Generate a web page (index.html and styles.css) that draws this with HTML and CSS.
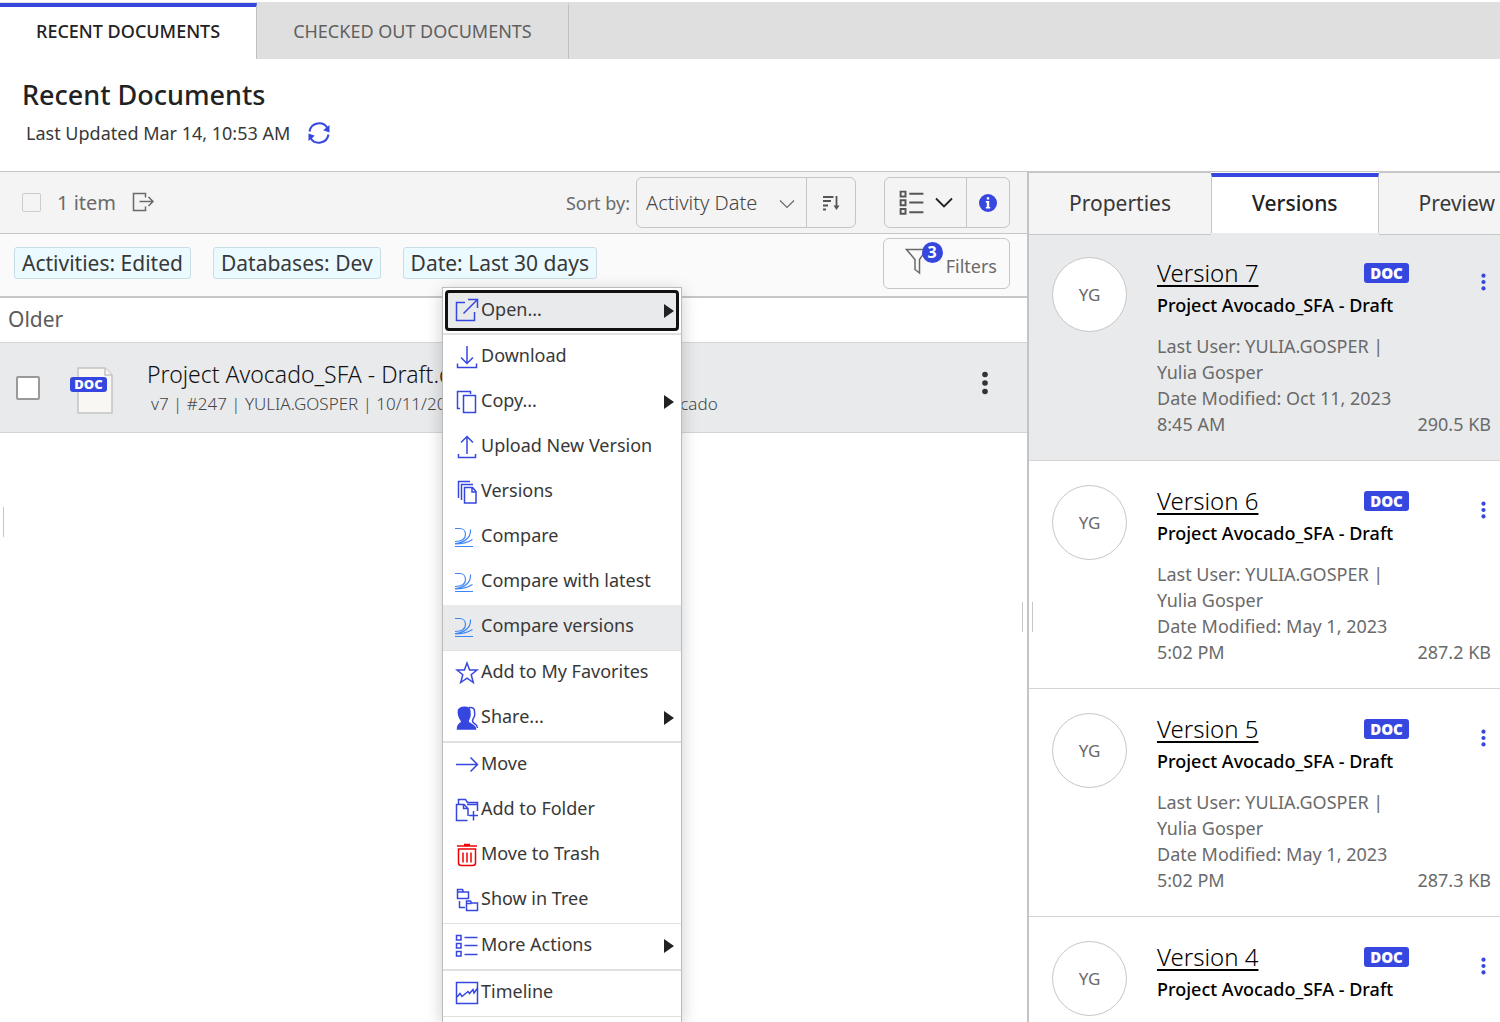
FILE: index.html
```
<!DOCTYPE html>
<html lang="en">
<head>
  <meta charset="UTF-8" />
  <meta name="viewport" content="width=device-width, initial-scale=1.0" />
  <title>Recent Documents</title>
  <link rel="stylesheet" href="styles.css">
</head>
<body>
  <!-- Shared icons -->
  <svg class="sprite" aria-hidden="true">
    <symbol id="icon-dots" viewBox="0 0 6 24">
      <circle cx="3" cy="3.5" r="2.8" /><circle cx="3" cy="12" r="2.8" /><circle cx="3" cy="20.5" r="2.8" />
    </symbol>
    <symbol id="icon-compare" viewBox="0 0 24 24">
      <path d="M0 3.500h4.500c4 0 6 3 6 6 0 5-5 7-10.500 7M15.500 4.500c.5 8-6 13.500-15.500 14M17.500 14.500c-4 2.500-8 4.500-17.500 4.500M0 21.500h18" />
    </symbol>
    <symbol id="icon-list" viewBox="0 0 24 24">
      <path d="M1.500 1.500h4.500v4.500H1.500zM1.500 9.500h4.500v4.500H1.500zM1.500 17.500h4.500v4.500H1.500zM9.500 3.500h13M9.500 11.500h13M9.500 20.500h13" />
    </symbol>
  </svg>

  <nav class="top-tabs">
    <button type="button" class="top-tab active">RECENT DOCUMENTS</button>
    <button type="button" class="top-tab">CHECKED OUT DOCUMENTS</button>
  </nav>

  <header class="page-header">
    <h1>Recent Documents</h1>
    <div class="updated">
      <span>Last Updated Mar 14, 10:53 AM</span>
      <button type="button" class="icon-button refresh" aria-label="Refresh">
        <svg width="24" height="24" viewBox="0 0 24 24">
          <path class="line" d="M2.500 10.500A9.800 9.800 0 0 1 20.500 7M21.500 13.500A9.800 9.800 0 0 1 3.500 17" />
          <path class="fill" d="M22.500 4v7.500l-6.300-2.200zM1.500 20v-7.500l6.300 2.200z" />
        </svg>
      </button>
    </div>
  </header>

  <main class="workspace">
    <section class="documents">
      <div class="toolbar">
        <input type="checkbox" class="check-all" aria-label="Select all">
        <span class="count">1 item</span>
        <button type="button" class="icon-button export" aria-label="Export">
          <svg width="24" height="22" viewBox="0 0 24 22">
            <path d="M13.500 5.500V1.500H1.500v17h12v-4M7.500 9.500H21M16.500 5l4.500 4.500-4.500 4.500" />
          </svg>
        </button>
        <label class="sort-label" for="sort">Sort by:</label>
        <div class="button-group">
          <div class="select-wrap">
            <select id="sort">
              <option>Activity Date</option>
            </select>
            <svg class="chevron" width="16" height="10" viewBox="0 0 16 10"><path d="M1 1.500l7 7 7-7" /></svg>
          </div>
          <button type="button" class="group-button sort-order" aria-label="Sort order">
            <svg width="18" height="18" viewBox="0 0 18 18">
              <path d="M1 3h10.500M1 7h8M1 11.500h5M1 15.500h3M14.500 2v11" />
              <path class="fill" d="M11.500 11.500h6l-3 4.500z" />
            </svg>
          </button>
        </div>
        <div class="button-group">
          <button type="button" class="group-button view" aria-label="View">
            <svg class="view-list" width="26" height="26"><use href="#icon-list" /></svg>
            <svg width="18" height="12" viewBox="0 0 18 12"><path class="dark" d="M1 1.500l8 8 8-8" /></svg>
          </button>
          <button type="button" class="group-button info" aria-label="Details">
            <svg width="18" height="18" viewBox="0 0 18 18">
              <circle cx="9" cy="9" r="9" />
              <path d="M7.800 3.200h2.400v2.300H7.800zM6.800 7h3.400v6h1v1.500H6.800V13h1V8.500h-1z" />
            </svg>
          </button>
        </div>
      </div>

      <div class="filter-bar">
        <span class="chip">Activities: Edited</span>
        <span class="chip">Databases: Dev</span>
        <span class="chip">Date: Last 30 days</span>
        <button type="button" class="filters">
          <span class="funnel">
            <svg width="26" height="28" viewBox="0 0 26 28">
              <path d="M1.500 2.500h20l-7 10v13.500l-4.500-3.500V12.500z" />
            </svg>
            <span class="badge">3</span>
          </span>
          Filters
        </button>
      </div>

      <h2 class="group-title">Older</h2>

      <div class="document">
        <input type="checkbox" class="check" aria-label="Select document">
        <span class="doc-icon">
          <svg width="36" height="48" viewBox="0 0 36 48">
            <path d="M1 1h27l7 7v38H1z" /><path d="M28 1v7h7" />
          </svg>
          <span class="doc-badge small">DOC</span>
        </span>
        <div class="document-text">
          <p class="document-name">Project Avocado_SFA - Draft.docx</p>
          <p class="document-meta">v7 | #247 | YULIA.GOSPER | 10/11/2023 8:45AM | Dev | Project Avocado</p>
        </div>
        <button type="button" class="icon-button more" aria-label="Document actions">
          <svg width="6" height="24"><use href="#icon-dots" /></svg>
        </button>
      </div>

      <span class="grip grip-left"></span>

      <!-- Context menu -->
      <div class="menu" role="menu">
        <button type="button" class="menu-item focused" role="menuitem">
          <svg viewBox="0 0 24 24"><path d="M10 4.500H1.500v18h18V14M8.500 15.500L22.500 1.500M13 1.500h9.500V10" /></svg>
          Open...<span class="arrow"></span>
        </button>
        <hr class="thick">
        <button type="button" class="menu-item" role="menuitem">
          <svg viewBox="0 0 24 24"><path d="M12 1v17M6 12.500l6 6 6-6M2.500 18.500v4h19v-4" /></svg>
          Download
        </button>
        <button type="button" class="menu-item" role="menuitem">
          <svg viewBox="0 0 24 24"><path d="M15.500 4V1.500h-13v17H5M8.500 5.500h12v17h-12z" /></svg>
          Copy...<span class="arrow"></span>
        </button>
        <button type="button" class="menu-item" role="menuitem">
          <svg viewBox="0 0 24 24"><path d="M12 19V1.500M6 7.500l6-6 6 6M3.500 19v3.500h17V19" /></svg>
          Upload New Version
        </button>
        <button type="button" class="menu-item" role="menuitem">
          <svg viewBox="0 0 24 24"><path d="M15 1.500H3.500V18M18 4.500H6.500V20M9.500 7.500h8l3.500 4v11.500H9.500zM17 7.500v4.500h4" /></svg>
          Versions
        </button>
        <button type="button" class="menu-item" role="menuitem">
          <svg class="compare"><use href="#icon-compare" /></svg>
          Compare
        </button>
        <button type="button" class="menu-item" role="menuitem">
          <svg class="compare"><use href="#icon-compare" /></svg>
          Compare with latest
        </button>
        <button type="button" class="menu-item hovered" role="menuitem">
          <svg class="compare"><use href="#icon-compare" /></svg>
          Compare versions
        </button>
        <hr>
        <button type="button" class="menu-item" role="menuitem">
          <svg viewBox="0 0 24 24"><path d="M12 2l2.600 7H22l-5.800 4.700 2.100 7.800L12 17.200l-6.300 4.300 2.100-7.800L2 9h7.400z" /></svg>
          Add to My Favorites
        </button>
        <button type="button" class="menu-item" role="menuitem">
          <svg viewBox="0 0 24 24">
            <path class="fill" d="M3.500 4C5 1 13.500 0 14.500 3.500c.8 2 .5 4 .5 5.500 0 2.500-1.500 4.500-2 6 0 3.500 7 3 7.500 8H2.500c0-3 .5-4.500 3.500-6 1-.5.5-2 0-3C4 12 3 7 3.500 4z" />
            <path d="M14 1.500c3.500-.5 5.500 1 5.500 3.500 0 2 .5 3 0 5s-2 3-2 5c0 3 5 2.500 5 7" />
          </svg>
          Share...<span class="arrow"></span>
        </button>
        <hr class="thick">
        <button type="button" class="menu-item" role="menuitem">
          <svg viewBox="0 0 24 24"><path d="M1 11.500h21.500M15.500 4.500l7 7-7 7" /></svg>
          Move
        </button>
        <button type="button" class="menu-item" role="menuitem">
          <svg viewBox="0 0 24 24"><path d="M3.500 6V1.500h7l2 3h10V13M12 6.500h10.500M12.500 22.500h-11V6.500h7.500l4 4V18M8.500 6.500v4h4.500M18.500 13v9.500M14 17.500h9" /></svg>
          Add to Folder
        </button>
        <button type="button" class="menu-item" role="menuitem">
          <svg class="trash" viewBox="0 0 24 24"><path d="M2 3h20M9 1.500h6M3.500 6h17V20q0 2.500-3 2.500h-11q-3 0-3-2.500zM8 9.500v10M12 9.500v10M16 9.500v10" /></svg>
          Move to Trash
        </button>
        <button type="button" class="menu-item" role="menuitem">
          <svg viewBox="0 0 24 24"><path d="M2.500 10.500v-9h5l1 2.500h5v6.500zM2.500 4h6M4.500 13v6.500H10M11.500 22.500V13h4l1 2h6v7.500zM11.500 15.500h5" /></svg>
          Show in Tree
        </button>
        <hr>
        <button type="button" class="menu-item" role="menuitem">
          <svg><use href="#icon-list" /></svg>
          More Actions<span class="arrow"></span>
        </button>
        <hr class="thick">
        <button type="button" class="menu-item" role="menuitem">
          <svg viewBox="0 0 24 24"><path d="M1.500 1.500h21v21h-21zM2 16l3-3.500 2 3 6-5 1.500 2L18 8.500l1 3.500 3.500-5" /></svg>
          Timeline
        </button>
        <hr>
      </div>
    </section>

    <aside class="details">
      <span class="grip grip-before"></span>
      <span class="grip grip-after"></span>
      <nav class="detail-tabs">
        <button type="button" class="detail-tab">Properties</button>
        <button type="button" class="detail-tab active">Versions</button>
        <button type="button" class="detail-tab">Preview</button>
      </nav>

      <article class="version selected">
        <span class="avatar">YG</span>
        <div class="version-body">
          <div class="version-head">
            <a href="#">Version 7</a>
            <span class="doc-badge">DOC</span>
          </div>
          <h3>Project Avocado_SFA - Draft</h3>
          <p>Last User: YULIA.GOSPER | Yulia Gosper</p>
          <p>Date Modified: Oct 11, 2023 8:45 AM</p>
        </div>
        <div class="version-side">
          <button type="button" class="icon-button more-blue" aria-label="Version 7 actions">
            <svg width="5" height="18"><use href="#icon-dots" /></svg>
          </button>
          <span>290.5 KB</span>
        </div>
      </article>

      <article class="version">
        <span class="avatar">YG</span>
        <div class="version-body">
          <div class="version-head">
            <a href="#">Version 6</a>
            <span class="doc-badge">DOC</span>
          </div>
          <h3>Project Avocado_SFA - Draft</h3>
          <p>Last User: YULIA.GOSPER | Yulia Gosper</p>
          <p>Date Modified: May 1, 2023 5:02 PM</p>
        </div>
        <div class="version-side">
          <button type="button" class="icon-button more-blue" aria-label="Version 6 actions">
            <svg width="5" height="18"><use href="#icon-dots" /></svg>
          </button>
          <span>287.2 KB</span>
        </div>
      </article>

      <article class="version">
        <span class="avatar">YG</span>
        <div class="version-body">
          <div class="version-head">
            <a href="#">Version 5</a>
            <span class="doc-badge">DOC</span>
          </div>
          <h3>Project Avocado_SFA - Draft</h3>
          <p>Last User: YULIA.GOSPER | Yulia Gosper</p>
          <p>Date Modified: May 1, 2023 5:02 PM</p>
        </div>
        <div class="version-side">
          <button type="button" class="icon-button more-blue" aria-label="Version 5 actions">
            <svg width="5" height="18"><use href="#icon-dots" /></svg>
          </button>
          <span>287.3 KB</span>
        </div>
      </article>

      <article class="version">
        <span class="avatar">YG</span>
        <div class="version-body">
          <div class="version-head">
            <a href="#">Version 4</a>
            <span class="doc-badge">DOC</span>
          </div>
          <h3>Project Avocado_SFA - Draft</h3>
        </div>
        <div class="version-side">
          <button type="button" class="icon-button more-blue" aria-label="Version 4 actions">
            <svg width="5" height="18"><use href="#icon-dots" /></svg>
          </button>
        </div>
      </article>
    </aside>
  </main>
</body>
</html>
```
FILE: styles.css
```
:root {
  --blue: #3647e0;
  --text: #383838;
  --muted: #6a6a6a;
  --border: #c6c6c6;
  --selected: #e9eaec;
}

* {
  box-sizing: border-box;
  margin: 0;
  padding: 0;
}

body {
  display: flex;
  flex-direction: column;
  height: 100vh;
  overflow: hidden;
  background: #fff;
  color: var(--text);
  font-family: "Noto Sans", "Open Sans", sans-serif;
  font-size: 18px;
  font-weight: 400;
}

button,
select {
  border: none;
  background: none;
  color: inherit;
  font: inherit;
  cursor: pointer;
}

svg {
  flex: none;
  fill: none;
}

.sprite {
  position: absolute;
  width: 0;
  height: 0;
}

.icon-button {
  display: flex;
}

/* Top tabs */
.top-tabs {
  display: flex;
  flex: none;
  height: 57px;
  margin-top: 2px;
  background: #dfdfdf;
}

.top-tab {
  padding: 0 36px 4px;
  border-top: 4px solid transparent;
  border-right: 1px solid #c0c0c0;
  color: #606060;
}

.top-tab.active {
  margin-top: 1px;
  border-top-color: var(--blue);
  background: #fff;
  color: #222;
  font-weight: 500;
}

.page-header {
  flex: none;
  height: 112px;
  padding: 18px 22px;
}

h1 {
  color: #222;
  font-size: 27px;
  font-weight: 500;
  line-height: 36px;
}

.updated {
  display: flex;
  align-items: center;
  gap: 17px;
  padding: 8px 4px;
}

.refresh .line {
  stroke: var(--blue);
  stroke-width: 2;
}

.refresh .fill {
  fill: var(--blue);
}

.workspace {
  display: flex;
  flex: 1;
  min-height: 0;
  overflow: hidden;
  border-top: 1px solid var(--border);
}

/* Document list */
.documents {
  position: relative;
  flex: 1;
  min-width: 0;
}

.toolbar {
  display: flex;
  align-items: center;
  height: 62px;
  padding: 0 17px 0 22px;
  border-bottom: 1px solid var(--border);
  background: #f4f4f4;
  color: var(--muted);
}

.check-all,
.check {
  appearance: none;
  flex: none;
}

.check-all {
  width: 19px;
  height: 19px;
  border: 1px solid #ccc;
  border-radius: 2px;
}

.count {
  margin: 0 16px;
  font-size: 20px;
}

.export svg {
  stroke: var(--muted);
  stroke-width: 1.5;
}

.sort-label {
  margin-left: auto;
  margin-right: 6px;
}

.button-group {
  display: flex;
  height: 51px;
  border: 1px solid var(--border);
  border-radius: 6px;
}

.button-group + .button-group {
  margin-left: 28px;
}

.select-wrap {
  position: relative;
}

select {
  appearance: none;
  width: 169px;
  height: 100%;
  padding: 0 40px 0 9px;
  color: #444;
  font-size: 20px;
  font-weight: 300;
}

.chevron {
  position: absolute;
  top: 21px;
  right: 11px;
  stroke: var(--muted);
  stroke-width: 1.2;
  pointer-events: none;
}

.group-button {
  display: flex;
  align-items: center;
  justify-content: center;
  width: 49px;
  border-left: 1px solid var(--border);
  stroke: #555;
  stroke-width: 1.8;
}

.group-button .fill {
  fill: #555;
  stroke: none;
}

.group-button.view {
  gap: 10px;
  width: 81px;
  border-left: none;
}

.group-button .dark {
  stroke: #222;
}

.group-button.info {
  width: 43px;
  stroke: none;
}

.info circle {
  fill: var(--blue);
}

.info path {
  fill: #fff;
}

.filter-bar {
  display: flex;
  align-items: flex-start;
  height: 64px;
  padding: 4px 17px 0 14px;
  border-bottom: 2px solid var(--border);
  background: #fafafa;
}

.chip {
  margin-top: 9px;
  margin-right: 22px;
  padding: 0 7px;
  border: 1px solid #c9dde4;
  border-radius: 3px;
  background: #eafaff;
  font-size: 21px;
  line-height: 30px;
}

.filters {
  display: flex;
  align-items: flex-start;
  gap: 14px;
  height: 51px;
  margin-left: auto;
  padding: 8px 12px 0 20px;
  border: 1px solid var(--border);
  border-radius: 6px;
  color: var(--muted);
  line-height: 38px;
}

.funnel {
  position: relative;
  width: 28px;
  stroke: var(--muted);
  stroke-width: 1.5;
}

.badge {
  position: absolute;
  top: -5px;
  right: -11px;
  width: 21px;
  height: 21px;
  border-radius: 50%;
  background: var(--blue);
  color: #fff;
  font-size: 16px;
  font-weight: 700;
  line-height: 21px;
  text-align: center;
}

.group-title {
  height: 45px;
  padding-left: 8px;
  border-bottom: 1px solid #d5d5d5;
  color: #5c5c5c;
  font-size: 21px;
  font-weight: 400;
  line-height: 43px;
}

.document {
  display: flex;
  align-items: center;
  height: 90px;
  padding: 0 39px 0 16px;
  border-bottom: 1px solid #d5d5d5;
  background: var(--selected);
}

.check {
  width: 24px;
  height: 24px;
  border: 2px solid #999;
  border-radius: 2px;
  background: #fff;
}

.doc-icon {
  position: relative;
  margin: 6px 34px 0 37px;
}

.doc-icon svg {
  display: block;
  fill: #f8f7f3;
  stroke: #c4c4c4;
  stroke-width: 1.5;
}

.doc-badge {
  width: 45px;
  border-radius: 3px;
  background: var(--blue);
  color: #fff;
  font-family: "Open Sans", sans-serif;
  font-size: 15px;
  font-weight: 800;
  line-height: 20px;
  text-align: center;
}

.doc-badge.small {
  position: absolute;
  top: 10px;
  left: -7px;
  width: 37px;
  font-size: 13px;
  line-height: 15px;
}

.document-text {
  flex: 1;
  min-width: 0;
  white-space: nowrap;
}

.document-name {
  color: #111;
  font-size: 23px;
  font-weight: 300;
  line-height: 32px;
}

.document-meta {
  padding-left: 4px;
  color: #444;
  font-size: 17px;
  font-weight: 300;
  line-height: 28px;
}

.more {
  margin-bottom: 10px;
  fill: #333;
}

.more-blue {
  fill: var(--blue);
}

.more svg,
.more-blue svg {
  fill: inherit;
}

.grip {
  position: absolute;
  width: 1px;
  height: 30px;
  background: var(--border);
}

.grip-left {
  top: 335px;
  left: 3px;
}

.grip-before {
  top: 430px;
  left: -7px;
}

.grip-after {
  top: 430px;
  left: 3px;
}

/* Context menu */
.menu {
  position: absolute;
  top: 115px;
  bottom: 0;
  left: 442px;
  width: 240px;
  border: 1px solid #bbb;
  border-bottom: none;
  background: #fff;
  box-shadow: 0 4px 16px rgba(0, 0, 0, 0.2);
}

.menu-item {
  display: flex;
  align-items: center;
  gap: 2px;
  width: 100%;
  height: 45px;
  padding: 0 7px 5px 12px;
  text-align: left;
}

.menu-item svg {
  width: 24px;
  height: 24px;
  margin-top: 3px;
  stroke: var(--blue);
  stroke-width: 1.5;
}

.menu-item .fill {
  fill: var(--blue);
}

.menu-item .compare {
  stroke: #3f86f5;
  stroke-width: 1.2;
}

.menu-item .trash {
  stroke: #f00000;
}

.menu-item.focused {
  border: 2px solid #fff;
  border-radius: 6px;
  outline: 3px solid #111;
  outline-offset: -5px;
  background: var(--selected);
  padding: 0 5px 4px 10px;
}

.menu-item.hovered {
  background: var(--selected);
}

.arrow {
  margin-left: auto;
  margin-top: 4px;
  border-top: 7px solid transparent;
  border-bottom: 7px solid transparent;
  border-left: 10px solid #222;
}

.menu hr {
  border: none;
  border-top: 1px solid #e0e0e0;
}

.menu hr.thick {
  border-top-width: 2px;
}

/* Version panel */
.details {
  position: relative;
  flex: none;
  width: 473px;
  border-left: 2px solid #c3c3cb;
}

.detail-tabs {
  display: flex;
  position: relative;
  height: 63px;
  margin-bottom: -2px;
  overflow: hidden;
}

.detail-tab {
  flex: none;
  padding: 0 40px 2px;
  border-top: 1px solid var(--border);
  border-bottom: 1px solid var(--border);
  background: #f4f4f4;
  font-size: 21px;
}

.detail-tab.active {
  margin: 1px 0 2px;
  padding-bottom: 4px;
  border: 1px solid var(--border);
  border-top: 4px solid var(--blue);
  border-bottom: none;
  background: #fff;
  color: #222;
  font-weight: 500;
}

.version {
  display: flex;
  height: 228px;
  padding: 24px 9px 0 23px;
  border-bottom: 1px solid #d5d5d5;
  color: var(--muted);
}

.version.selected {
  background: var(--selected);
}

.avatar {
  flex: none;
  width: 75px;
  height: 75px;
  margin-right: 30px;
  border: 1px solid var(--border);
  border-radius: 50%;
  background: #fff;
  font-size: 17px;
  line-height: 73px;
  text-align: center;
}

.version-body {
  width: 252px;
  line-height: 26px;
}

.version-head {
  display: flex;
  align-items: center;
  justify-content: space-between;
  height: 31px;
}

.version-head a {
  color: #000;
  font-size: 24px;
  font-weight: 300;
  text-underline-offset: 3px;
}

.version h3 {
  margin-bottom: 11px;
  color: #000;
  font-size: 18px;
  font-weight: 500;
  line-height: 34px;
}

.version-side {
  display: flex;
  flex: 1;
  flex-direction: column;
  align-items: flex-end;
  justify-content: space-between;
  padding: 16px 0 23px;
  line-height: 26px;
  white-space: nowrap;
}

.version-side button {
  margin-right: 5px;
}
```
